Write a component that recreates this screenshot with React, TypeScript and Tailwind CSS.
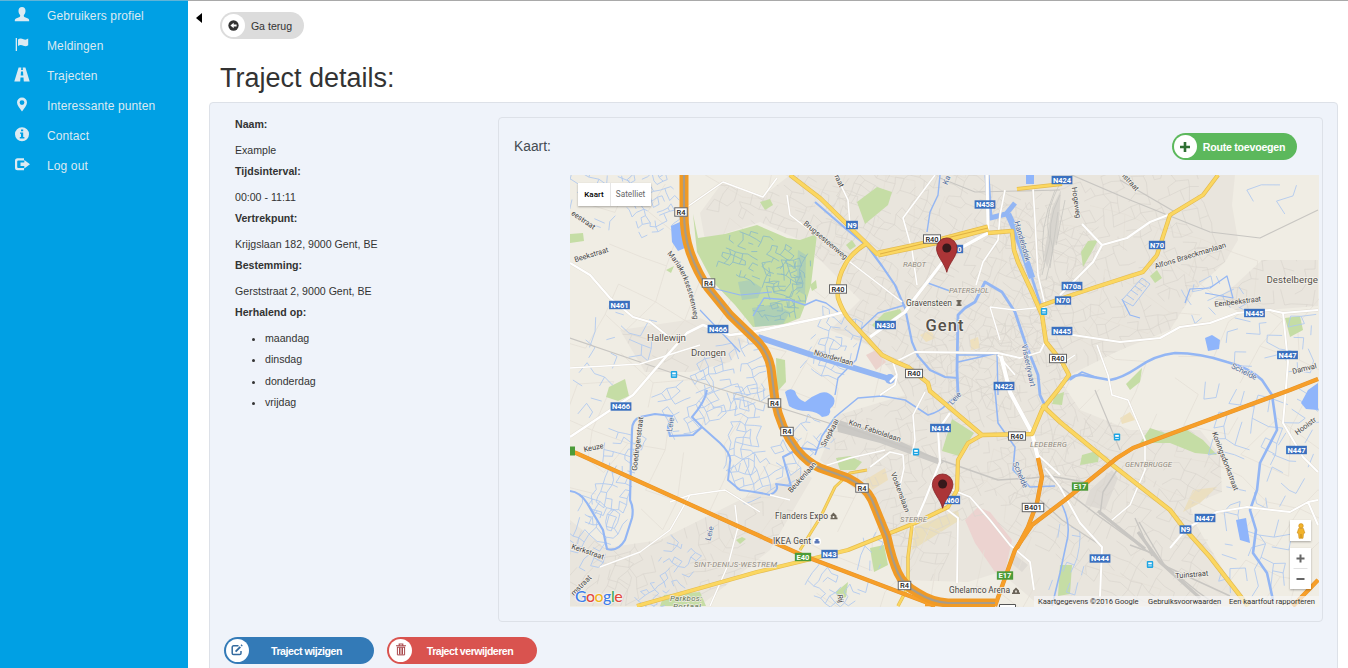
import type { ReactNode } from "react";

/* ---------- icons ---------- */

function UserIcon() {
  return (
    <svg viewBox="0 0 16 16" className="size-4" fill="currentColor">
      <path d="M8 0C5.800 0 4.500 1.500 4.500 3.800c0 1.600.5 3 1.400 4 .5.600.4 1.700-.3 2.100L2 11.500c-1 .5-1.200 1.300-1.200 2.700h14.400c0-1.400-.2-2.200-1.200-2.700L10.400 9.900c-.7-.4-.8-1.500-.3-2.100.9-1 1.400-2.400 1.400-4C11.500 1.500 10.200 0 8 0z" />
    </svg>
  );
}
function FlagIcon() {
  return (
    <svg viewBox="0 0 16 16" className="size-4" fill="currentColor">
      <path d="M1.700 1h1.300v13H1.700z" />
      <path d="M4 2.400c2-1.600 3.800-.9 5.400-.2 1.500.6 3 .7 4.800-.6v6.600c-1.800 1.300-3.300 1.100-4.800.5C7.800 8.100 6 7.500 4 9z" />
    </svg>
  );
}
function RoadIcon() {
  return (
    <svg viewBox="0 0 16 16" className="size-4" fill="currentColor">
      <path d="M4.600 .5h2.700l-.2 2.500h1.800L8.700 .5h2.700l4.300 14H9.800l-.3-4h-3l-.3 4H.3zM7 4.500l-.3 4h2.600L9 4.500z" fillRule="evenodd" />
    </svg>
  );
}
function MarkerIcon() {
  return (
    <svg viewBox="0 0 16 16" className="size-4" fill="currentColor">
      <path d="M8 .5a5 5 0 0 0-5 5c0 3 3 6 5 9 2-3 5-6 5-9a5 5 0 0 0-5-5zm0 2.700a2.400 2.400 0 1 1 0 4.800 2.400 2.400 0 0 1 0-4.800z" fillRule="evenodd" />
    </svg>
  );
}
function InfoIcon() {
  return (
    <svg viewBox="0 0 16 16" className="size-4" fill="currentColor">
      <path d="M8 .2a7 7 0 1 0 0 14A7 7 0 0 0 8 .2zM7 2.400h2.200v1.800H7zM6 5.400h3.200V10h1.200v1.400H5.800V10H7V6.800H6z" fillRule="evenodd" />
    </svg>
  );
}
function LogoutIcon() {
  return (
    <svg viewBox="0 0 16 16" className="size-4" fill="currentColor">
      <path d="M10 1.200H3.500A2.500 2.500 0 0 0 1 3.700v7a2.500 2.500 0 0 0 2.500 2.500H10v-2.200H4.200a1 1 0 0 1-1-1V4.400a1 1 0 0 1 1-1H10z" />
      <path d="M10.300 2.900 16 7.200l-5.700 4.300V8.900H6.500V5.500h3.800z" />
    </svg>
  );
}
function BackIcon() {
  return (
    <svg viewBox="0 0 12 12" className="size-[11px]">
      <circle cx="6" cy="6" r="5.600" fill="#333" />
      <path d="M2.600 6 6.200 2.900v2h3.200v2.200H6.200v2z" fill="#fff" />
    </svg>
  );
}
function PlusIcon() {
  return (
    <svg viewBox="0 0 12 12" className="mr-px size-[12px]">
      <path d="M4.700 1h2.600v3.700H11v2.600H7.300V11H4.700V7.300H1V4.700h3.700z" fill="#2f6f33" />
    </svg>
  );
}
function EditIcon() {
  return (
    <svg viewBox="0 0 12 12" className="mr-px mb-[2px] size-[12px]" fill="none" stroke="#336a9e">
      <path d="M7.500 1.800H2.600a1.400 1.400 0 0 0-1.400 1.400v6a1.400 1.400 0 0 0 1.400 1.400h6A1.400 1.400 0 0 0 10 9.200V7" strokeWidth="1.500" />
      <path d="M4.600 7.600 9.300 2.800" strokeWidth="1.900" />
      <path d="m10.200 1.900.9-.9" strokeWidth="1.800" />
    </svg>
  );
}
function TrashIcon() {
  return (
    <svg viewBox="0 0 12 13" className="mb-[2px] h-[13px] w-[12px]" fill="none" stroke="#a8484c">
      <path d="M1 2.700h10M4.200 2.500V1h3.600v1.500M2 4.300h8" strokeWidth="1.100" />
      <path d="M2.400 4v7.900h7.200V4M4.500 4.500v7M6 4.500v7M7.500 4.500v7" strokeWidth="1" />
    </svg>
  );
}

/* ---------- map drawing ---------- */

function random(seed: number) {
  let s = seed;
  return () => {
    s = (s * 16807) % 2147483647;
    return s / 2147483647;
  };
}

/* Irregular street grid around a centre, with some segments left out. */
function streets(cx: number, cy: number, w: number, h: number, deg: number, step: number, keep: number, seed: number) {
  const rnd = random(seed);
  const a = (deg * Math.PI) / 180;
  const nx = Math.round(w / step);
  const ny = Math.round(h / step);
  const pts: [number, number][][] = [];
  for (let j = 0; j <= ny; j++) {
    const row: [number, number][] = [];
    for (let i = 0; i <= nx; i++) {
      const x = (i - nx / 2) * step + (rnd() - 0.5) * step * 0.6;
      const y = (j - ny / 2) * step + (rnd() - 0.5) * step * 0.6;
      row.push([cx + x * Math.cos(a) - y * Math.sin(a), cy + x * Math.sin(a) + y * Math.cos(a)]);
    }
    pts.push(row);
  }
  let d = "";
  const seg = (p: [number, number], q: [number, number]) => {
    if (rnd() < keep) d += `M${p[0].toFixed(1)} ${p[1].toFixed(1)}L${q[0].toFixed(1)} ${q[1].toFixed(1)}`;
  };
  for (let j = 0; j <= ny; j++)
    for (let i = 0; i <= nx; i++) {
      if (i < nx) seg(pts[j][i], pts[j][i + 1]);
      if (j < ny) seg(pts[j][i], pts[j + 1][i]);
    }
  return d;
}

const RURAL_STREETS = streets(944, 390, 800, 480, 24, 34, 0.5, 77);
const CITY_STREETS = [
  streets(940, 270, 250, 200, 28, 9, 0.62, 11),
  streets(960, 430, 240, 170, -20, 9, 0.6, 23),
  streets(1120, 270, 200, 190, -18, 10, 0.55, 35),
  streets(1130, 500, 200, 180, 32, 11, 0.55, 41),
  streets(780, 200, 140, 60, 20, 9, 0.55, 59),
  streets(1250, 280, 130, 70, 2, 11, 0.5, 63),
  streets(860, 560, 160, 90, 12, 11, 0.5, 71),
  streets(700, 570, 200, 90, -15, 12, 0.5, 83),
  streets(640, 370, 160, 60, 18, 12, 0.45, 95),
  streets(595, 580, 70, 70, 30, 11, 0.5, 99),
].join("");

const MEADOW_DITCHES = [
  streets(765, 262, 84, 50, 22, 6, 0.5, 7),
  streets(785, 285, 36, 50, -8, 6, 0.5, 9),
  streets(775, 312, 40, 18, -8, 6, 0.5, 8),
].join("");

const DITCHES = [
  streets(650, 198, 66, 46, 65, 6, 0.5, 5),
  streets(592, 198, 50, 50, 20, 9, 0.35, 6),
  streets(735, 375, 60, 66, -20, 8, 0.6, 9),
  streets(690, 405, 56, 44, -28, 8, 0.6, 10),
  streets(745, 430, 30, 84, 8, 7, 0.65, 12),
  streets(615, 480, 34, 100, 15, 7, 0.55, 13),
  streets(590, 535, 46, 66, 30, 8, 0.55, 14),
  streets(765, 472, 60, 36, -25, 8, 0.55, 15),
  streets(833, 345, 44, 60, 20, 7, 0.45, 16),
  streets(680, 558, 34, 30, 30, 7, 0.55, 17),
  streets(660, 592, 40, 24, -40, 6, 0.55, 18),
  streets(812, 440, 34, 34, 40, 7, 0.5, 19),
  streets(1280, 200, 60, 30, -5, 14, 0.25, 20),
  streets(1215, 295, 50, 34, -20, 9, 0.3, 21),
  streets(1268, 340, 90, 60, 5, 11, 0.35, 22),
  streets(1240, 425, 80, 70, 12, 13, 0.45, 24),
  streets(1255, 545, 60, 110, 8, 13, 0.4, 25),
  streets(1300, 440, 40, 100, 20, 12, 0.35, 26),
  streets(832, 590, 50, 30, 40, 7, 0.6, 27),
  streets(585, 385, 40, 80, 35, 11, 0.35, 28),
  streets(625, 335, 60, 40, 15, 12, 0.35, 29),
  streets(870, 560, 24, 60, 10, 10, 0.35, 30),
  streets(1070, 560, 24, 60, 10, 9, 0.35, 31),
].join("");

const URBAN = [
  "M700 213 722 183 763 196 790 175H1235L1232 205 1238 240 1225 262 1195 290 1170 330 1120 350 1060 380 1080 410 1130 430 1200 430 1220 455 1222 492 1190 505 1196 525 1245 606H1040L1000 572 968 582 905 580 880 510 820 460 838 415 905 395 890 370 868 345 830 330 860 300 800 240 760 222 705 240z",
  "M1262 260H1318V306L1240 312 1215 300 1235 285z",
  "M570 520 605 548 660 540 740 500 800 470 812 478 770 550 700 606H570z",
  "M620 330 700 318 745 340 730 362 690 372 645 372z",
];

const PARKS = [
  "M693 214 698 238 725 234 757 225 787 238 800 240 817 234 811 285 805 305 800 318 785 324 753 327 735 305 713 282 697 252z",
  "M857 202 877 187 892 192 888 205 865 224z",
  "M952 419 974 433 959 456 942 451z",
  "M1140 443 1150 428 1165 433 1184 428 1203 440 1217 455 1195 453 1170 443z",
  "M660 606 664 595 700 592 706 606z",
  "M606 397 609 387 625 379 629 396 618 401z",
  "M872 325 884 313 900 309 903 315 890 322 876 329z",
  "M836 458 850 456 862 462 855 470 840 470z",
  "M870 548 884 545 888 565 874 572z",
  "M1081 252 1088 241 1098 240 1090 255 1083 267z",
  "M1126 384 1142 368 1140 382 1130 390z",
  "M1150 276 1157 270 1162 278 1155 283z",
  "M1285 318 1300 316 1303 330 1290 337z",
  "M1060 565 1072 565 1070 594 1058 596z",
  "M570 234 583 233 584 241 570 243z",
  "M760 202 770 199 773 205 765 210z",
  "M1055 395 1064 392 1062 405 1052 404z",
  "M1082 455 1100 450 1098 462 1080 465z",
  "M776 358 785 360 786 382 777 392z",
  "M810 285 816 280 817 288 812 291z",
  "M742 537 746 539 740 544 736 540z",
  "M666 270 674 266 671 273z",
  "M836 592 848 582 846 597 838 600z",
  "M846 245 852 240 856 246 850 250z",
];

const LAKES = [
  "M671 226 680 222 685 248 678 251 672 242z",
  "M785 392Q790 387 795 391Q797 399 805 402 812 396 820 393 828 390 834 398 836 404 830 409 832 416 822 417 818 412 808 411 796 411 789 406z",
  "M1205 338 1212 335 1220 340 1219 349 1208 351z",
  "M1301 403 1308 390 1318 383V410L1306 409z",
  "M1236 520 1246 518 1250 543 1240 540z",
  "M1026 175H1034V184H1026z",
];

const RIVERS = [
  { w: 2.2, d: "M815 202 845 228 868 247 882 266 895 285 905 308 912 342 918 356 930 370 945 377 958 378" },
  { w: 6, d: "M758 337 815 356 890 379" },
  { w: 2.8, d: "M958 395 957 370 958 315 965 308 975 302 985 282 1002 292 1015 312 1025 342 1038 375 1040 395 1046 408" },
  { w: 5, d: "M987 175 990 218 1006 214 1015 203" },
  { w: 6.5, d: "M1008 214 1013 225 1022 248 1032 278" },
  { w: 2.5, d: "M1032 278 1043 312" },
  { w: 2, d: "M707 390Q705 402 692 417L702 427 720 443Q732 455 730 462L728 480 740 490Q758 492 770 495 780 490 776 484L791 486 783 457 800 448 817 450" },
  { w: 1.6, d: "M815 455 822 436 835 417 858 398 882 396 905 400 928 415Q940 412 948 403L958 395" },
  { w: 2.2, d: "M702 427 693 435 670 436 668 427 672 416 655 414 640 417Q632 420 632 430L631 460 630 500Q634 508 632 518L625 540Q618 552 607 549 605 540 603 530L587 503Q580 492 570 491" },
  { w: 2.6, d: "M1060 387Q1070 374 1082 375L1110 380Q1122 378 1137 368 1155 355 1175 353 1200 353 1227 362 1250 368 1262 380L1272 395 1277 430 1260 463 1257 490 1250 510 1256 530 1253 553 1267 573 1273 600" },
  { w: 1.6, d: "M1070 380 1082 372 1098 378M995 390 998 423 1015 447 1013 470 1030 487 1055 486M1062 505Q1072 525 1066 545L1060 573 1052 606" },
  { w: 1.4, d: "M940 175 938 195 930 212 927 232M753 316 764 298 790 300 805 305 816 300 826 303 838 312M862 336 856 360 838 378 835 395M958 355 990 355M958 362 998 353M997 353 998 395M925 282 950 291M860 330 878 313 905 305" },
  { w: 1.2, d: "M700 310 740 352M712 288 740 295 772 292M1122 299 1130 315 1140 318M1185 303 1190 289 1210 288 1227 276 1233 298 1205 293" },
];

const RAILS = [
  { w: 1.2, d: "M570 338 640 362 717 388 835 425" },
  { w: 1.6, d: "M835 423 998 480 1032 478 1050 476 1090 483" },
  { w: 1.4, d: "M1045 475 1100 517 1150 553 1198 592 1218 606" },
  { w: 3.2, d: "M1098 511 1145 549M1138 532 1160 562 1200 598" },
  { w: 1.4, d: "M1135 518 1152 556M1139 522 1165 566M1130 545 1152 553M1165 566 1230 596M1100 515 1103 492 1117 470" },
  { w: 0.8, d: "M1062 180Q1042 215 1050 240L1042 275M1060 195Q1045 225 1053 250L1046 280M1055 190Q1038 230 1044 262M1065 200 1056 245M1058 212 1050 268" },
  { w: 1.2, d: "M1060 170 1130 200 1210 232 1260 238 1318 210M1120 180 1175 212M940 178 975 192 1060 190M1040 500 1062 520 1100 545M1095 390 1120 450" },
];

const WHITE_ROADS = [
  { w: 2.6, d: "M845 312 820 318 753 332 730 335 703 325 687 333 670 352 633 395 570 437" },
  { w: 2.2, d: "M570 263 590 275 610 298 633 317 650 322 670 338" },
  { w: 1.500, d: "M687 207 723 182 763 197 777 178M787 195 790 215 812 232 850 262 880 285 902 302M570 368 640 364 700 345" },
  { w: 3.2, d: "M988 233 948 255 912 302 905 312 870 337" },
  { w: 3, d: "M987 175 988 230" },
  { w: 1.600, d: "M935 175 903 218 912 250 917 285M1033 188 1035 220 1038 275 1045 305M1005 190 1000 215 998 240 983 262 976 285M836 175 848 200 850 225" },
  { w: 2.2, d: "M1168 215 1150 222 1127 238 1102 245 1093 262 1060 295M1082 224 1102 245" },
  { w: 2.2, d: "M1062 330 1073 335 1120 342 1160 338 1180 327 1210 323 1237 313 1270 310 1283 313 1318 310" },
  { w: 2, d: "M1283 313 1288 362 1285 400 1283 423 1303 457 1318 472" },
  { w: 2, d: "M1170 548 1187 528 1217 512 1247 507 1290 512 1308 502 1318 500M1308 502 1318 525" },
  { w: 2.2, d: "M950 413 938 430 940 462 925 500 912 530" },
  { w: 1.800, d: "M945 508 958 518 957 583M948 488 970 497 990 520 1010 545 1030 562 1034 590" },
  { w: 2, d: "M1045 468 1060 487 1080 523 1102 547 1100 597M1038 455 1060 475" },
  { w: 4, d: "M1001 356 1010 392 1032 433 1038 458" },
  { w: 1.800, d: "M895 362 915 352 998 353 1020 358 1040 352 1046 340M998 355 1015 375M890 382 897 375 893 362 M897 376 895 385 880 395" },
  { w: 1.600, d: "M925 392 913 415 915 440 912 455M870 467 890 452 903 455 904 468 898 495M818 468 850 458 885 450M1097 345 1108 375 1112 395 1128 400 1145 440 1145 470 1130 505 1112 520" },
  { w: 1.4, d: "M670 502 690 495 725 490 760 512M690 495 670 530 640 552 600 567M738 527 728 565 710 606M735 505 738 530M790 500 770 495M1075 355 1060 365M990 307 1015 310 1045 307M990 307 1000 340" },
];

const YELLOW_ROADS = [
  { w: 4.5, d: "M790 175 820 198 865 242 878 255" },
  { w: 7, d: "M878 254 935 242 988 228" },
  { w: 4.500, d: "M988 233 1012 231 1014 250 1018 262 1032 292 1042 315 1046 342 1062 362 1069 375 1058 390 1042 410 1032 434 982 435 930 391 928 383 908 367Q895 362 882 355L848 318Q842 310 838 298 836 280 845 265 850 254 867 243" },
  { w: 4.2, d: "M982 435 968 443 958 460 957 490 948 507 915 523 848 550 815 558 757 572 637 606" },
  { w: 3.5, d: "M912 526 908 557 908 587 898 606" },
  { w: 4.6, d: "M1042 405 1060 422 1110 463 1170 510 1183 527 1210 557 1248 606" },
  { w: 4.2, d: "M1218 175 1203 195 1170 215 1157 255 1143 272 1093 288 1060 299 1040 306" },
  { w: 4, d: "M1017 189 1062 184" },
  { w: 3, d: "M867 470 850 473 835 487 820 518 800 550" },
];

const MOTORWAYS = [
  "M570 451 576 453 804 556 820 562 928 603 935 606",
  "M995 606 1015 550 1032 525 1065 500 1117 458 1133 448 1173 433 1290 390 1318 379",
  "M1293 606 1318 580",
  "M1038 458 1042 477 1037 503 1028 527 1017 548",
  "M925 604 995 604",
];
const R4 = "M684 175V212Q684 235 690 252 697 272 708 288L730 315 757 341Q768 352 771 368L775 400Q780 428 797 450 808 463 820 468L848 478Q866 487 872 500L887 537Q892 560 898 573 904 586 918 593 932 602 948 603H995";

type ShieldKind = "n" | "r" | "e";
const SHIELDS: [number, number, string, ShieldKind][] = [
  [1062, 180, "N424", "n"], [985, 204.5, "N458", "n"], [852, 225, "N9", "n"], [932, 239, "R40", "r"],
  [838, 289, "R40", "r"], [681, 212, "R4", "r"], [708.5, 283, "R4", "r"], [619.5, 305, "N461", "n"],
  [718, 329, "N466", "n"], [885.5, 325, "N430", "n"], [1157, 245, "N70", "n"], [1072, 286, "N70a", "n"],
  [1063, 300.5, "N70", "n"], [1062, 331, "N445", "n"], [1058, 358.5, "R40", "r"], [914, 373.5, "R40", "r"],
  [1004, 386, "N422", "n"], [1254.5, 313, "N445", "n"], [1287.5, 355, "N447", "n"], [774.5, 403, "R4", "r"],
  [787, 431.5, "R4", "r"], [621, 406.5, "N466", "n"], [940.5, 428, "N414", "n"], [1017, 436, "R40", "r"],
  [1296.5, 450, "N447", "n"], [862, 488, "R4", "r"], [952, 500, "N60", "n"], [1033, 507.5, "B401", "r"],
  [1080, 486.5, "E17", "e"], [1205, 518, "N447", "n"], [1185.5, 529.5, "N9", "n"], [829.5, 554, "N43", "n"],
  [803, 557, "E40", "e"], [1005, 575.5, "E17", "e"], [1100, 558.5, "N444", "n"], [904.5, 585.5, "R4", "r"],
  [959.5, 249, "0", "n"],
];

function Shield({ x, y, text, kind }: { x: number; y: number; text: string; kind: ShieldKind }) {
  const w = text.length * 4.5 + (kind === "r" ? 3.5 : 2.8);
  const fill = kind === "n" ? "#3a70bf" : kind === "e" ? "#4c9b38" : "#fff";
  return (
    <g>
      <rect x={x - w / 2} y={y - 4.2} width={w} height={8.4} fill={fill} stroke={kind === "r" ? "#666" : "none"} strokeWidth="1" />
      <text x={x} y={y + 2.7} textAnchor="middle" fontSize="7.5" fontWeight={kind === "r" ? 500 : 700} fill={kind === "r" ? "#222" : "#fff"}>
        {text}
      </text>
    </g>
  );
}

/* centre x, baseline y, rotation, text */
const STREET_LABELS: [number, number, number, string][] = [
  [592, 257, -17, "Beekstraat"], [582, 222, 34, "eestraat"],
  [824, 242, 40, "Brugsesteenweg"], [833, 360, 16, "Noorderlaan"], [837, 182, 65, "raat"],
  [1128, 183, 48, "nstraat"], [1191, 258, -17, "Alfons Braeckmanlaan"], [1238, 304, -7, "Eenbeekstraat"],
  [1305, 371, -14, "Damval"], [1307, 428, -36, "Hooistr"], [874, 433, 19, "Kon. Fabiolalaan"],
  [832, 434, -62, "Snepkaai"], [804, 479, -48, "Beukenlaan"], [594, 450, -11, "Keuze"],
  [640, 444, -83, "Goedingenstraat"], [587, 554, 19, "Kerkstraat"], [583, 587, -45, "mstraat"],
  [1192, 577, -5, "Tuinstraat"], [1223, 462, 69, "Koningsdonkstraat"], [1074, 203, 82, "Hogeweg"],
  [898, 493, 70, "Voskenslaan"], [838, 599, 80, "Rij"],
];
const WATER_LABELS: [number, number, number, string][] = [
  [1243, 374, 27, "Schelde"], [1018, 476, 67, "Schelde"], [957, 400, -48, "Leie"],
  [673, 425, -80, "Leie"], [712, 534, -75, "Leie"], [1020, 242, 74, "Handelsdok"],
  [1026, 366, 78, "Visserijvaart"], [949, 181, -68, "Ka"],
];

function Pin({ x, y }: { x: number; y: number }) {
  return (
    <g transform={`translate(${x} ${y})`}>
      <path d="M0 24C-2 15-10.300 8-10.300 0a10.300 10.300 0 0 1 20.600 0C10.300 8 2 15 0 24z" fill="#ab3537" stroke="#852326" strokeWidth=".8" />
      <circle r="4.500" cy="-.3" fill="#37191b" />
    </g>
  );
}

function Lines({ items, color, extra = 0 }: { items: { w: number; d: string }[]; color: string; extra?: number }) {
  return (
    <g stroke={color} fill="none" strokeLinejoin="round">
      {items.map((r, i) => (
        <path key={i} d={r.d} strokeWidth={r.w + extra} />
      ))}
    </g>
  );
}

function MapDrawing() {
  return (
    <svg viewBox="570 175 749 432" className="block h-full w-full" fontFamily="Roboto, 'Liberation Sans', sans-serif">
      <defs>
        <clipPath id="urban">
          {URBAN.map((d, i) => <path key={i} d={d} />)}
        </clipPath>
        <clipPath id="meadow">
          <path d={PARKS[0]} />
        </clipPath>
      </defs>
      <rect x="570" y="175" width="749" height="432" fill="#f0ede4" />
      {URBAN.map((d, i) => <path key={i} d={d} fill="#e9e5dd" />)}
      <path d="M965 520 978 507 990 512 1012 540 1005 572 995 572 975 543z" fill="#ecd3d0" />
      <path d="M915 527 958 510 960 520 912 550z" fill="#eadfbd" />
      <path d="M1183 512 1193 490 1217 487 1200 503z" fill="#ebdfc0" />
      <path d="M866 355 876 350 886 362 876 370z" fill="#ebd3cd" />
      <path d="M865 480 885 468 888 480 872 490z" fill="#ecdfc0" />
      <path d="M970 340 978 337 980 348 971 350zM920 335 930 330 936 338 926 342zM1120 418 1130 412 1135 420 1122 424z" fill="#eee0bd" />
      <path d="M1090 490 1112 470 1118 478 1105 510 1085 505zM1015 555 1028 565 1022 572 1010 562z" fill="#dedad4" />
      <path d={RURAL_STREETS} stroke="#e4dfd7" strokeWidth=".8" fill="none" />
      <path d={CITY_STREETS} clipPath="url(#urban)" stroke="#dad6ce" strokeWidth=".7" fill="none" />
      {PARKS.map((d, i) => <path key={i} d={d} fill="#c5dda5" />)}
      <g clipPath="url(#meadow)">
        <path d="M738 282 750 280 762 288 758 298 742 300zM752 308 775 304 790 312 782 326 755 327zM798 250 806 255 805 295 796 290z" fill="#a9cdb8" opacity=".8" />
        <path d={MEADOW_DITCHES} stroke="#8fbcc4" strokeWidth=".9" fill="none" />
      </g>
      <path d={DITCHES} stroke="#adc7f0" strokeWidth=".85" fill="none" />
      {LAKES.map((d, i) => <path key={i} d={d} fill="#8fb5fb" />)}
      <path d="M836 419 845 422 885 434 944 462 940 465 880 443 838 432z" fill="#cbc9c5" />
      <path d="M1052 208 1061 190 1058 235 1047 268 1044 255z" fill="#d8d5cf" />
      <Lines items={RAILS} color="#c8c6c2" />
      <Lines items={RIVERS} color="#93b6f4" />
      <circle cx="890" cy="379" r="5" fill="#93b6f4" />
      <Lines items={WHITE_ROADS} color="#dfdad0" extra={0.7} />
      <Lines items={WHITE_ROADS} color="#fff" />
      <path d="M1122 300 1142 278 1150 284 1133 306z" fill="none" stroke="#a5c2f0" strokeWidth=".9" />
      <path d="M1127 295l7 5M1131 290l7 5M1135 286l7 5M1139 282l7 5" stroke="#a5c2f0" strokeWidth=".9" />
      <Lines items={YELLOW_ROADS} color="#e4bb50" />
      <Lines items={YELLOW_ROADS} color="#fbd761" extra={-1.3} />
      <path d="M880 254 988 228" stroke="#dfb044" strokeWidth="1" />
      <g fill="none" strokeLinejoin="round">
        {MOTORWAYS.map((d, i) => <path key={i} d={d} stroke="#e3932a" strokeWidth="4.300" />)}
        {MOTORWAYS.map((d, i) => <path key={i} d={d} stroke="#f79f29" strokeWidth="3.400" />)}
        <path d={R4} stroke="#f09a25" strokeWidth="9" />
        <path d={R4} stroke="#a89c88" strokeWidth="2.200" />
      </g>

      {SHIELDS.map(([x, y, t, k], i) => <Shield key={i} x={x} y={y} text={t} kind={k} />)}
      <rect x="570" y="446.500" width="5" height="9" fill="#4c9b38" />
      <path d="M999.500 607V604.500h16V607" fill="#fff" stroke="#555" />

      <g fontSize="7.400" fill="#444" stroke="#f3f0ea" strokeWidth="1.500" paintOrder="stroke" textAnchor="middle">
        {STREET_LABELS.map(([x, y, r, t], i) => (
          <text key={i} x={x} y={y} transform={`rotate(${r} ${x} ${y})`}>{t}</text>
        ))}
        <path id="maria" d="M667 254Q688 275 694 322" fill="none" stroke="none" />
        <text textAnchor="start"><textPath href="#maria">Mariakerksesteenweg</textPath></text>
      </g>
      <g fontSize="7.800" fill="#4d6a9c" stroke="#f3f0ea" strokeWidth="1.200" paintOrder="stroke" textAnchor="middle">
        {WATER_LABELS.map(([x, y, r, t], i) => (
          <text key={i} x={x} y={y} transform={`rotate(${r} ${x} ${y})`}>{t}</text>
        ))}
      </g>
      <g fill="#55504a" stroke="#f3f0ea" strokeWidth="1.800" paintOrder="stroke" fontSize="9.800">
        <text x="647" y="340.500" textLength="39">Hallewijn</text>
        <text x="691" y="355.500" textLength="35">Drongen</text>
        <text x="1266.500" y="283" textLength="51.500">Destelberge</text>
        <text x="925.500" y="331" fontSize="16.500" fontWeight="500" textLength="38">Gent</text>
      </g>
      <g fill="#4a4744" stroke="#f3f0ea" strokeWidth="1.600" paintOrder="stroke" fontSize="8.500">
        <text x="906" y="306" textLength="46">Gravensteen</text>
        <text x="775" y="518.500" textLength="53">Flanders Expo</text>
        <text x="773" y="544" textLength="38">IKEA Gent</text>
        <text x="949" y="593" textLength="61">Ghelamco Arena</text>
      </g>
      <g fill="#8f8a80" stroke="#f0ece5" strokeWidth="1.400" paintOrder="stroke" fontSize="7.800" fontStyle="italic">
        <text x="903" y="267" textLength="23">RABOT</text>
        <text x="949" y="292.500" textLength="40">PATERSHOL</text>
        <text x="1030" y="447" textLength="37">LEDEBERG</text>
        <text x="1125" y="467" textLength="47">GENTBRUGGE</text>
        <text x="900" y="522" textLength="27">STERRE</text>
        <text x="694" y="566.500" textLength="83">SINT-DENIJS-WESTREM</text>
        <text x="670" y="600.500" fontSize="8" fill="#5d7350" textLength="32">Parkbos:</text>
        <text x="673" y="608.500" fontSize="8" fill="#5d7350" textLength="28">Portaal</text>
      </g>

      <path d="M956.500 300h5v1.500h-1v3h1v1.500h-5v-1.500h1v-3h-1z" fill="#6b6459" />
      <path d="M830.500 515.500 833.500 512.500 836.500 515.500v2h1v1.700h-7v-1.700h1zM832.700 516v2h1.600v-2z" fill="#6b6459" fillRule="evenodd" />
      <path d="M1013 590.500 1016 587.500 1019 590.500v2h1v1.500h-8v-1.500h1zM1015.200 590.500v2h1.600v-2z" fill="#6b6459" fillRule="evenodd" />
      <circle cx="817" cy="541.500" r="4" fill="#fff" />
      <path d="M814.500 541h5v2.500h-5zM815.500 539h3v2h-3z" fill="#5a78b8" />
      {[[674, 374.500], [1044, 311.500], [916, 452], [1117, 437], [1150, 564.500]].map(([x, y], i) => (
        <g key={i}>
          <rect x={x - 3.2} y={y - 3.4} width="6.400" height="6.800" rx="1" fill="#1fa5e3" />
          <rect x={x - 1.8} y={y - 2} width="3.600" height="1.800" fill="#fff" />
          <rect x={x - 1.8} y={y + 1} width="3.600" height=".8" fill="#fff" />
        </g>
      ))}
      <Pin x={946.8} y={248.3} />
      <Pin x={942.6} y={484.3} />
    </svg>
  );
}

function Pegman() {
  return (
    <svg viewBox="0 0 10 16" className="h-[16px] w-[10px]">
      <circle cx="5" cy="2.900" r="2.300" fill="#f2b32b" stroke="#c98a16" strokeWidth=".6" />
      <path d="M2.600 5.500h4.800L8.800 10l-1.300.5-.5 4.800H3l-.5-4.800L1.200 10z" fill="#f2b32b" stroke="#c98a16" strokeWidth=".6" />
      <path d="M5 11v4" stroke="#b37a12" strokeWidth=".7" />
    </svg>
  );
}

function MapView() {
  return (
    <div className="relative h-[432px] w-[749px] overflow-hidden font-[Roboto,sans-serif]">
      <MapDrawing />
      <div className="absolute top-2 left-2 flex h-[23px] w-[73px] items-center bg-white text-[8px] shadow-[0_1px_2px_rgba(0,0,0,0.3)]">
        <span className="w-8 text-center font-['Roboto',sans-serif] font-medium text-black">Kaart</span>
        <span className="flex h-full flex-1 items-center justify-center border-l border-[#e6e6e6] pr-px text-[8.2px] text-[#666]">Satelliet</span>
      </div>
      <div className="absolute top-[345px] left-[720px] flex size-[21px] items-center justify-center bg-white shadow-[0_1px_2px_rgba(0,0,0,0.3)]">
        <Pegman />
      </div>
      <div className="absolute top-[373px] left-[720px] flex h-[41px] w-[21px] flex-col items-center bg-white shadow-[0_1px_2px_rgba(0,0,0,0.3)]">
        <svg viewBox="0 0 21 41" className="h-[41px] w-[21px]">
          <path d="M6.500 10.500h8M10.500 6.500v8M6.500 31h8" stroke="#666" strokeWidth="2" />
          <path d="M3.500 20.500h14" stroke="#e2e2e2" />
        </svg>
      </div>
      <div className="absolute bottom-px left-[5px] font-['Lato',sans-serif] text-[16px] leading-[20px] font-medium tracking-[-0.55px] [text-shadow:0_0_2px_white,0_0_2px_white]">
        <span className="text-[#3f7de8]">G</span>
        <span className="text-[#e2483c]">o</span>
        <span className="text-[#f0b51c]">o</span>
        <span className="text-[#3f7de8]">g</span>
        <span className="text-[#3da757]">l</span>
        <span className="text-[#e2483c]">e</span>
      </div>
      <div className="absolute right-0 bottom-0 flex h-[11px] items-center bg-[#f5f5f5]/70 pr-[4px] pl-[4px] text-[7.6px] leading-none tracking-[-0.03px] whitespace-nowrap text-[#333]">
        <span className="w-[110px]">Kaartgegevens ©2016 Google</span>
        <span className="w-[81px]">Gebruiksvoorwaarden</span>
        <span className="w-[86px]">Een kaartfout rapporteren</span>
      </div>
    </div>
  );
}

/* ---------- page ---------- */

const NAV: { label: string; icon: ReactNode }[] = [
  { label: "Gebruikers profiel", icon: <UserIcon /> },
  { label: "Meldingen", icon: <FlagIcon /> },
  { label: "Trajecten", icon: <RoadIcon /> },
  { label: "Interessante punten", icon: <MarkerIcon /> },
  { label: "Contact", icon: <InfoIcon /> },
  { label: "Log out", icon: <LogoutIcon /> },
];

const DETAILS = [
  ["Naam:", "Example"],
  ["Tijdsinterval:", "00:00 - 11:11"],
  ["Vertrekpunt:", "Krijgslaan 182, 9000 Gent, BE"],
  ["Bestemming:", "Gerststraat 2, 9000 Gent, BE"],
];
const DAYS = ["maandag", "dinsdag", "donderdag", "vrijdag"];

function PillButton({ className, icon, children }: { className: string; icon: ReactNode; children: ReactNode }) {
  return (
    <button className={`flex h-[27px] items-center rounded-full pl-0.5 ${className}`}>
      <span className="flex size-[23px] shrink-0 items-center justify-center rounded-full bg-white">{icon}</span>
      <span className="flex-1 pt-[2px] text-center whitespace-nowrap">{children}</span>
    </button>
  );
}

export default function App() {
  return (
    <div className="flex h-[668px] w-[1348px] flex-col overflow-hidden bg-white font-['Liberation_Sans',Arial,sans-serif] text-[10.6px] text-[#333]">
      <div className="flex h-px shrink-0">
        <div className="w-[188px] bg-[#5fb4d8]" />
        <div className="flex-1 bg-[#a9a9a9]" />
      </div>
      <div className="flex min-h-0 flex-1">
        <nav className="w-[188px] shrink-0 bg-[#00a0e4] text-[12px] tracking-[0.12px] text-[#dceaf2]">
          {NAV.map((item) => (
            <a key={item.label} className="flex h-[30px] items-center">
              <span className="mb-[3px] ml-[14px] w-[33px]">{item.icon}</span>
              <span>{item.label}</span>
            </a>
          ))}
        </nav>
        <main className="flex flex-1 flex-col">
          <div className="flex h-[101px] shrink-0">
            <svg viewBox="0 0 6 10" className="mt-3 ml-2 h-[10px] w-[6px]">
              <path d="M6 0v10L0 5z" fill="#000" />
            </svg>
            <div className="ml-[18px] flex flex-col items-start">
              <PillButton className="mt-[11px] w-[84px] bg-[#dcdcdc] pr-[6px]" icon={<BackIcon />}>
                Ga terug
              </PillButton>
              <h1 className="mt-[23px] text-[27px] leading-8">Traject details:</h1>
            </div>
          </div>
          <section className="ml-[21px] h-[620px] w-[1129px] shrink-0 rounded-sm border border-[#dde1e8] bg-[#eff3fa]">
            <div className="flex h-[520px]">
              <div className="w-[288px] shrink-0 pt-[11px] pl-[25px] leading-[21px]">
                {DETAILS.map(([label, value]) => (
                  <div key={label}>
                    <div className="mb-[5px] font-bold">{label}</div>
                    <div>{value}</div>
                  </div>
                ))}
                <div className="mb-[5px] font-bold">Herhalend op:</div>
                <ul>
                  {DAYS.map((day) => (
                    <li key={day} className="flex h-[21.3px] items-center">
                      <span className="mt-0.5 mr-[10px] ml-[17px] size-[3px] rounded-full bg-[#333]" />
                      {day}
                    </li>
                  ))}
                </ul>
              </div>
              <div className="mt-[14px] h-[505px] w-[825px] rounded-sm border border-[#dde1e8]">
                <div className="flex h-[57px] items-center justify-between pr-[25px] pl-[15px]">
                  <h2 className="pt-0.5 text-[13.8px] text-[#444b52]">Kaart:</h2>
                  <PillButton className="w-[125px] bg-[#5cb85c] pr-1.5 font-bold tracking-[-0.23px] text-white" icon={<PlusIcon />}>
                    Route toevoegen
                  </PillButton>
                </div>
                <div className="ml-[71px]">
                  <MapView />
                </div>
              </div>
            </div>
            <div className="mt-[14px] ml-[14px] flex gap-[13px] font-bold text-white">
              <PillButton className="w-[150px] bg-[#337ab7] pr-[10px] tracking-[-0.46px]" icon={<EditIcon />}>
                Traject wijzigen
              </PillButton>
              <PillButton className="w-[150px] bg-[#d9534f] pr-[9px] tracking-[-0.5px]" icon={<TrashIcon />}>
                Traject verwijderen
              </PillButton>
            </div>
          </section>
        </main>
      </div>
    </div>
  );
}
